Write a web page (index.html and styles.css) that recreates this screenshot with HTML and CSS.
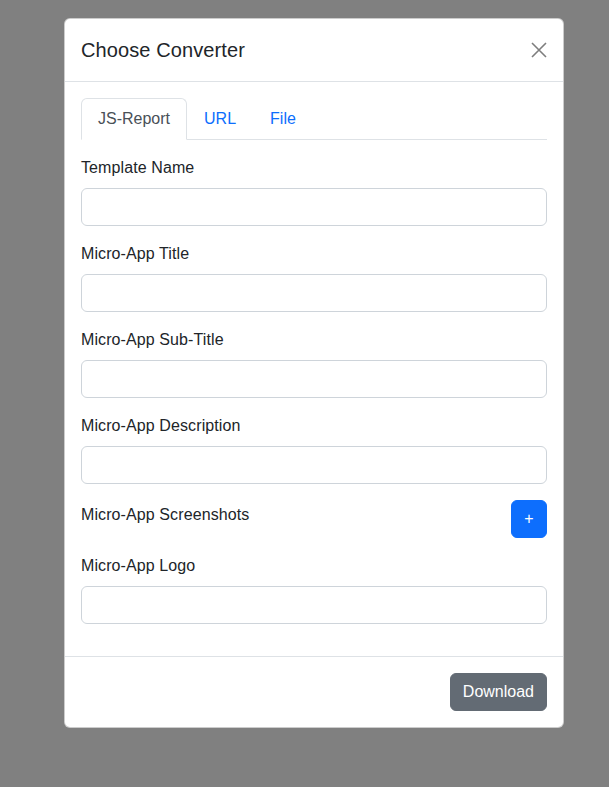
FILE: index.html
```html
<!DOCTYPE html>
<html lang="en">
<head>
<meta charset="utf-8">
<title>Choose Converter</title>
<link rel="stylesheet" href="styles.css">
</head>
<body>
<div class="backdrop">
  <div class="modal">
    <div class="modal-header">
      <h5 class="modal-title">Choose Converter</h5>
      <button class="btn-close" type="button" aria-label="Close">
        <svg viewBox="0 0 16 16" width="16" height="16"><path d="M1 1L15 15M15 1L1 15" stroke="#000" stroke-width="1.6" fill="none"/></svg>
      </button>
    </div>
    <div class="modal-body">
      <ul class="nav-tabs">
        <li><a class="nav-link active">JS-Report</a></li>
        <li><a class="nav-link">URL</a></li>
        <li><a class="nav-link">File</a></li>
      </ul>
      <div class="group">
        <label class="label">Template Name</label>
        <input class="input" type="text">
      </div>
      <div class="group">
        <label class="label">Micro-App Title</label>
        <input class="input" type="text">
      </div>
      <div class="group">
        <label class="label">Micro-App Sub-Title</label>
        <input class="input" type="text">
      </div>
      <div class="group">
        <label class="label">Micro-App Description</label>
        <input class="input" type="text">
      </div>
      <div class="group row">
        <label class="label">Micro-App Screenshots</label>
        <button class="btn btn-primary" type="button">+</button>
      </div>
      <div class="group">
        <label class="label">Micro-App Logo</label>
        <input class="input" type="text">
      </div>
    </div>
    <div class="modal-footer">
      <button class="btn btn-secondary" type="button">Download</button>
    </div>
  </div>
</div>
</body>
</html>
```
FILE: styles.css
```css
* { box-sizing: border-box; }
html, body { margin: 0; padding: 0; }
body {
  background: #808080;
  font-family: "Liberation Sans", Arial, sans-serif;
  font-size: 16px;
  line-height: 24px;
  color: #212529;
  min-height: 787px;
}
.backdrop {
  padding: 18px 0 0 64px;
}
.modal {
  width: 500px;
  background: #fff;
  border: 1px solid rgba(0,0,0,0.2);
  border-radius: 6px;
  overflow: hidden;
}
.modal-header {
  display: flex;
  align-items: center;
  justify-content: space-between;
  padding: 16px;
  border-bottom: 1px solid #dee2e6;
}
.modal-title {
  margin: 0;
  font-size: 20px;
  line-height: 30px;
  font-weight: 500;
  letter-spacing: 0.1px;
}
.btn-close {
  width: 32px;
  height: 32px;
  margin: -8px -8px -8px auto;
  padding: 8px;
  border: 0;
  background: transparent;
  opacity: 0.5;
  display: flex;
}
.modal-body {
  padding: 16px;
}
.nav-tabs {
  list-style: none;
  margin: 0 0 16px;
  padding: 0;
  display: flex;
  border-bottom: 1px solid #dee2e6;
}
.nav-link {
  display: block;
  padding: 8px 16px;
  margin-bottom: -1px;
  border: 1px solid transparent;
  border-radius: 6px 6px 0 0;
  color: #0d6efd;
}
.nav-link.active {
  color: #495057;
  background: #fff;
  border-color: #dee2e6 #dee2e6 #fff;
}
.group {
  margin-bottom: 16px;
}
.label {
  display: block;
  margin-bottom: 8px;
  letter-spacing: 0.1px;
}
.input {
  display: block;
  width: 100%;
  height: 38px;
  border: 1px solid #ced4da;
  border-radius: 6px;
  padding: 6px 12px;
  font: inherit;
  background: #fff;
}
.row {
  display: flex;
  align-items: center;
  justify-content: space-between;
}
.btn {
  font: inherit;
  line-height: 24px;
  border: 1px solid transparent;
  border-radius: 6px;
  padding: 6px 12px;
  color: #fff;
}
.btn-primary {
  background: #0d6efd;
  border-color: #0d6efd;
  width: 36px;
  padding: 6px 0;
}
.modal-footer {
  display: flex;
  justify-content: flex-end;
  padding: 12px;
  border-top: 1px solid #dee2e6;
}
.btn-secondary {
  margin: 4px;
  background: #636b74;
  border-color: #636b74;
}
```
